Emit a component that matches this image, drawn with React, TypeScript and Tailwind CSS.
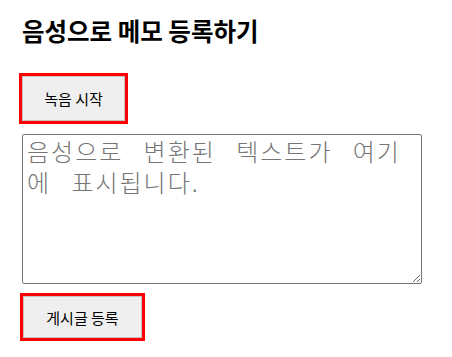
export default function App() {
  return (
    <div className="min-h-screen bg-white pl-[20px] pt-[17px] font-['Noto_Sans_CJK_KR','Noto_Sans',sans-serif] text-black">
      <h2 className="mb-[28px] ml-[2px] text-[24.5px] font-bold leading-[28px]">음성으로 메모 등록하기</h2>

      <button
        type="button"
        className="-ml-[1px] block h-[51px] w-[109px] border-[3px] border-[#ff0000] bg-[#efefef] text-[15px] leading-none shadow-[inset_0_0_0_1px_#c4c4c4]"
      >
        녹음 시작
      </button>

      <textarea
        className="mt-[10px] ml-[2px] block h-[150px] w-[400px] resize rounded-[2px] border border-[#767676] pt-0 pb-[2px] pl-[4px] pr-[2px] text-[24px] leading-[31px] font-light tracking-[2px] [word-spacing:13px] placeholder:text-[#757575]"
        placeholder="음성으로 변환된 텍스트가 여기에 표시됩니다."
      />

      <button
        type="button"
        className="mt-[9px] block h-[48px] w-[125px] border-[3px] border-[#ff0000] bg-[#efefef] text-[15px] leading-none shadow-[inset_0_0_0_1px_#c4c4c4]"
      >
        게시글 등록
      </button>
    </div>
  );
}
